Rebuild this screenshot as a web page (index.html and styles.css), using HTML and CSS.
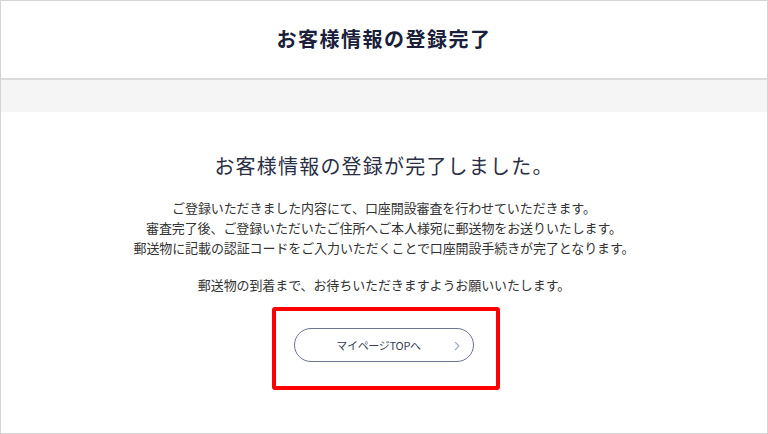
FILE: index.html
```html
<html>
<head>
    <title>お客様情報の登録完了</title>
    <link rel="stylesheet" href="styles.css">
</head>
<body>
    <div class="frame">
        <div class="header">
            <h1>お客様情報の登録完了</h1>
        </div>
        <div class="band"></div>
        <div class="content">
            <h2>お客様情報の登録が完了しました。</h2>
            <p>
                ご登録いただきました内容にて、口座開設審査を行わせていただきます。<br>
                審査完了後、ご登録いただいたご住所へご本人様宛に郵送物をお送りいたします。<br>
                郵送物に記載の認証コードをご入力いただくことで口座開設手続きが完了となります。
            </p>
            <p>郵送物の到着まで、お待ちいただきますようお願いいたします。</p>
            <div class="mark">
                <a class="btn" href="#">
                    <span>マイページTOPへ</span>
                    <svg class="chev" width="6" height="10" viewBox="0 0 6 10">
                        <path d="M1 1 L5 5 L1 9" fill="none" stroke="#9fb0c8" stroke-width="1.2"/>
                    </svg>
                </a>
            </div>
        </div>
    </div>
</body>
</html>
```

FILE: styles.css
```css
html, body {
    margin: 0;
    padding: 0;
}
body {
    font-family: "Noto Sans CJK JP", "Noto Sans", sans-serif;
    color: #2b2f45;
    background: #fff;
}

.frame {
    box-sizing: border-box;
    width: 768px;
    height: 434px;
    border: 1px solid #d4d4d4;
    display: flex;
    flex-direction: column;
}

.header {
    height: 77px;
    border-bottom: 2px solid #dcdcdc;
    display: flex;
    align-items: center;
    justify-content: center;
}
.header h1 {
    margin: 0 0 3px 0;
    font-size: 20px;
    font-weight: bold;
    letter-spacing: 1.5px;
    color: #1b1f3b;
}

.band {
    height: 32px;
    background: #f5f5f5;
}

.content {
    flex: 1;
    display: flex;
    flex-direction: column;
    align-items: center;
    padding-top: 39px;
}
.content h2 {
    margin: 0;
    font-size: 20px;
    font-weight: normal;
    letter-spacing: 1.2px;
    line-height: 30px;
    color: #2b2f45;
}
.content p {
    margin: 0;
    font-size: 13px;
    letter-spacing: -0.1px;
    line-height: 20px;
    text-align: center;
    color: #333;
}
.content h2 + p {
    margin-top: 17px;
}
.content p + p {
    margin-top: 17px;
}

.mark {
    margin-top: 12px;
    border: 4px solid #ff0000;
    border-radius: 3px;
    padding: 17px 22px 24px 18px;
    margin-left: 3px;
}

.btn {
    box-sizing: border-box;
    width: 180px;
    height: 34px;
    border: 1.5px solid #6d7490;
    border-radius: 17px;
    display: flex;
    align-items: center;
    justify-content: center;
    position: relative;
    text-decoration: none;
    color: #3a3f58;
    font-size: 11px;
}
.btn span {
    margin-left: -10px;
    letter-spacing: -0.3px;
}
.chev {
    position: absolute;
    right: 13px;
    top: 12px;
}
```
